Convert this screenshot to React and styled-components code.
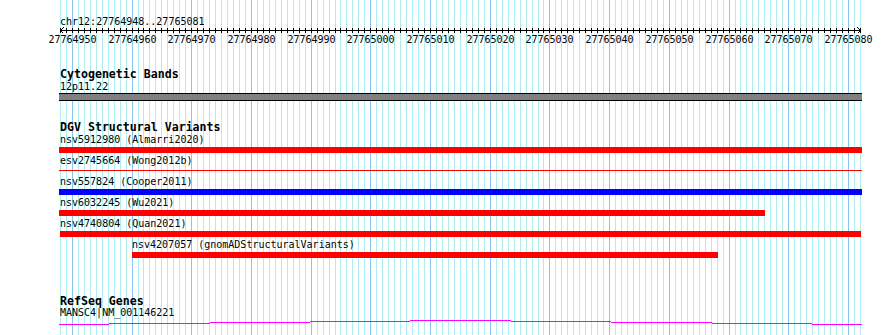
import React from 'react';
import styled, { createGlobalStyle } from 'styled-components';

const VIEW_START = 27764948;
const VIEW_END = 27765081;
const ORIGIN = 60.4;
const BP = 5.97;
const CLIP_L = 59;
const CLIP_R = 862;
const WIDTH = 890;
const HEIGHT = 335;

const toX = (b) => ORIGIN + (b - VIEW_START) * BP;

const gridLines = [];
for (let b = VIEW_START; b <= VIEW_START + 134; b++) {
  gridLines.push({ x: Math.floor(toX(b)) + 0.5, major: b % 10 === 0, base: b });
}

const variants = [
  { name: 'nsv5912980 (Almarri2020)', start: 27764930, end: 27765100, color: '#ff0000' },
  { name: 'esv2745664 (Wong2012b)', start: 27764930, end: 27765100, color: '#ff0000', thin: true },
  { name: 'nsv557824 (Cooper2011)', start: 27764930, end: 27765100, color: '#0000ff' },
  { name: 'nsv6032245 (Wu2021)', start: 27764930, end: 27765066, color: '#ff0000' },
  { name: 'nsv4740804 (Quan2021)', start: 27764948, end: 27765082, color: '#ff0000' },
  { name: 'nsv4207057 (gnomADStructuralVariants)', start: 27764960, end: 27765058, color: '#ff0000' },
];

// intron hat, drawn as GD would: stepped 1px line peaking mid-view
const hatPath = () => {
  const peak = 460.5;
  const step = 100.4;
  const pts = [CLIP_L];
  for (let k = 3; k >= 0; k--) pts.push(peak - (k + 0.5) * step);
  for (let k = 0; k <= 3; k++) pts.push(peak + (k + 0.5) * step);
  pts.push(CLIP_R);
  let d = '';
  for (let i = 0; i < pts.length - 1; i++) {
    const y = 2 + Math.abs(i - 4) + 0.5;
    d += `M${Math.round(pts[i])} ${y}H${Math.round(pts[i + 1])}`;
  }
  return d;
};

const GlobalStyle = createGlobalStyle`
  html, body {
    margin: 0;
    padding: 0;
    background: #fff;
  }
`;

const Page = styled.div`
  position: relative;
  width: ${WIDTH}px;
  height: ${HEIGHT}px;
  overflow: hidden;
  background: #fff;
  color: #000;
  font-family: 'DejaVu Sans Mono', 'Liberation Mono', monospace;
`;

const GridLayer = styled.svg`
  position: absolute;
  top: 0;
  left: 0;
  z-index: 0;
`;

const Content = styled.div`
  position: relative;
  z-index: 1;
  display: flex;
  flex-direction: column;
  padding-top: 16px;
`;

const PositionLabel = styled.div`
  padding-left: 60px;
  font-size: 10px;
  line-height: 11px;
  height: 11px;
  white-space: pre;
`;

const RulerSvg = styled.svg`
  display: block;
  font-family: 'DejaVu Sans Mono', 'Liberation Mono', monospace;
  font-size: 10px;
`;

const Track = styled.section`
  display: flex;
  flex-direction: column;
  margin-top: ${(p) => p.$gap}px;
`;

const TrackTitle = styled.div`
  padding-left: 60px;
  font-size: 11.6px;
  font-weight: bold;
  line-height: ${(p) => p.$lh || 13}px;
  height: ${(p) => p.$lh || 13}px;
  white-space: pre;
`;

const FeatureLabel = styled.div`
  font-size: 10px;
  line-height: 11px;
  height: 11px;
  white-space: pre;
`;

const Band = styled.div`
  margin: 1px 0 0 ${CLIP_L}px;
  width: ${CLIP_R - CLIP_L}px;
  height: 8px;
  box-sizing: border-box;
  border-top: 1px solid #000;
  border-bottom: 1px solid #000;
  background: #808080;
`;

const FeatureRow = styled.div`
  display: flex;
  flex-direction: column;
`;

const BarSlot = styled.div`
  height: 6px;
  margin: 2px 0;
  display: flex;
  flex-direction: column;
`;

const Bar = styled.div`
  background: ${(p) => p.$color};
  height: ${(p) => (p.$thin ? 1 : 6)}px;
  margin-top: ${(p) => (p.$thin ? 2 : 0)}px;
`;

const GeneSvg = styled.svg`
  display: block;
`;

const Ruler = () => (
  <RulerSvg width={WIDTH} height={18} shapeRendering="crispEdges">
    <path d={`M${CLIP_L + 1} 3.5H${CLIP_R - 1}`} stroke="#000" />
    {gridLines.map((g) => (
      <path key={g.base} d={`M${g.x} 1V6`} stroke="#000" />
    ))}
    <path d="M60.5 3.5L63.5 0.5M60.5 3.5L63.5 6.5" stroke="#000" />
    <path d="M860.5 3.5L857.5 0.5M860.5 3.5L857.5 6.5" stroke="#000" />
    {gridLines
      .filter((g) => g.major)
      .map((g) => (
        <text key={g.base} x={g.x} y={16.3} textAnchor="middle" fill="#000">
          {g.base}
        </text>
      ))}
  </RulerSvg>
);

export default function App() {
  return (
    <Page>
      <GlobalStyle />
      <GridLayer width={WIDTH} height={HEIGHT} shapeRendering="crispEdges">
        {gridLines.map((g) => (
          <path
            key={g.base}
            d={`M${g.x} 0V${HEIGHT}`}
            stroke={g.major ? '#87c6ee' : '#aeeef0'}
          />
        ))}
      </GridLayer>

      <Content>
        <PositionLabel>
          chr12:{VIEW_START}..{VIEW_END}
        </PositionLabel>
        <Ruler />

        <Track $gap={23}>
          <TrackTitle>Cytogenetic Bands</TrackTitle>
          <FeatureLabel style={{ marginLeft: 60 }}>12p11.22</FeatureLabel>
          <Band />
        </Track>

        <Track $gap={20}>
          <TrackTitle>DGV Structural Variants</TrackTitle>
          {variants.map((v) => {
            const left = Math.max(CLIP_L, Math.floor(toX(v.start)));
            const right = Math.min(CLIP_R, Math.ceil(toX(v.end)));
            return (
              <FeatureRow key={v.name}>
                <FeatureLabel style={{ marginLeft: Math.max(left, 60) }}>{v.name}</FeatureLabel>
                <BarSlot>
                  <Bar
                    $color={v.color}
                    $thin={v.thin}
                    style={{ marginLeft: left, width: right - left }}
                  />
                </BarSlot>
              </FeatureRow>
            );
          })}
        </Track>

        <Track $gap={35}>
          <TrackTitle $lh={12}>RefSeq Genes</TrackTitle>
          <FeatureLabel style={{ marginLeft: 60 }}>MANSC4|NM_001146221</FeatureLabel>
          <GeneSvg width={WIDTH} height={8} shapeRendering="crispEdges">
            <path d={hatPath()} stroke="#ff00ff" fill="none" />
          </GeneSvg>
        </Track>
      </Content>
    </Page>
  );
}
